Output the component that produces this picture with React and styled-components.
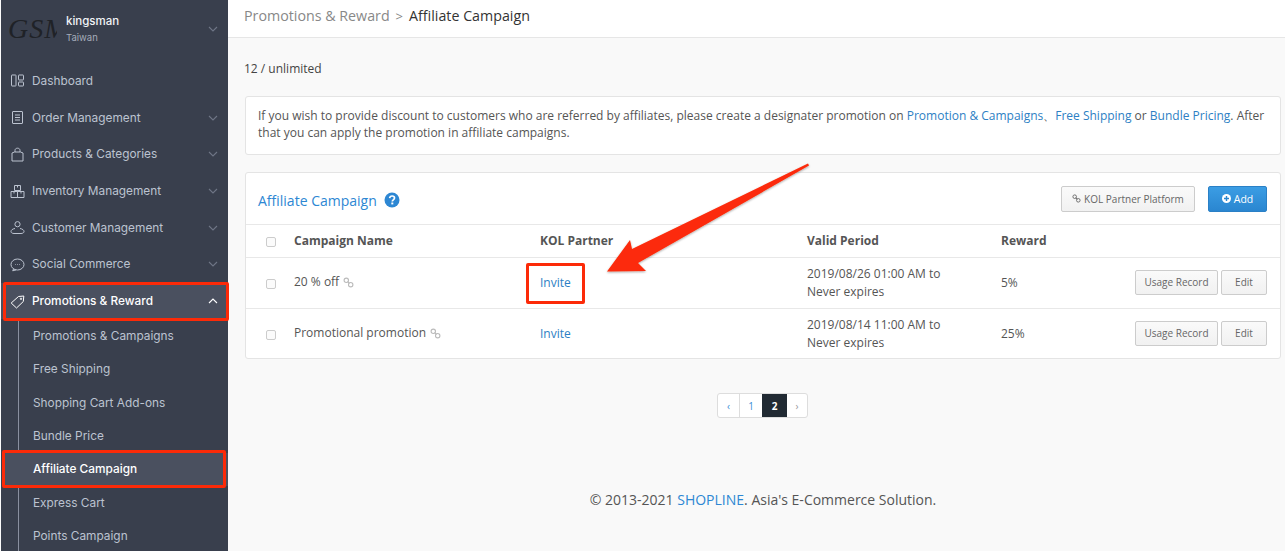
import React from 'react';
import styled, { createGlobalStyle } from 'styled-components';

const GlobalStyle = createGlobalStyle`
  html, body {
    margin: 0;
    padding: 0;
    height: 100%;
    overflow: hidden;
    background: #f9f9f9;
  }
  * { box-sizing: border-box; }
`;

const Page = styled.div`
  position: relative;
  display: flex;
  width: 1285px;
  height: 551px;
  overflow: hidden;
  font-family: 'Open Sans', sans-serif;
  color: #555;
`;

const Sidebar = styled.aside`
  width: 228px;
  flex: none;
  height: 551px;
  overflow: hidden;
  padding-left: 1px;
  background: #fbfbfb;
  font-family: Inter, sans-serif;
`;

const SidebarInner = styled.div`
  height: 100%;
  background: #393f4d;
`;

const Brand = styled.div`
  display: flex;
  align-items: center;
  height: 62.6px;
  padding: 0 10px 4px 7px;
`;

const Logo = styled.div`
  width: 49px;
  height: 32px;
  overflow: hidden;
  font: italic 28px/32px 'Liberation Serif', serif;
  color: #1f2227;
  letter-spacing: 1px;
  white-space: nowrap;
`;

const BrandText = styled.div`
  flex: 1;
  margin-left: 9px;
  margin-top: -1px;
`;

const BrandName = styled.div`
  font-size: 11.5px;
  font-weight: 500;
  line-height: 16px;
  color: #f2f4f7;
`;

const BrandRegion = styled.div`
  font-size: 9.5px;
  line-height: 14px;
  margin-top: 2px;
  color: #a5acba;
`;

const MenuItem = styled.div`
  display: flex;
  align-items: center;
  height: 36.7px;
  padding: 0 10px 0 9px;
  font-size: 11.85px;
  font-weight: ${p => (p.$active ? 500 : 400)};
  color: ${p => (p.$active ? '#fff' : '#bcc3d0')};
  background: ${p => (p.$active ? '#4a505f' : 'transparent')};
`;

const MenuIcon = styled.svg`
  width: 15px;
  height: 15px;
  flex: none;
  margin-right: 7px;
  fill: none;
  stroke: currentColor;
  stroke-width: 1;
`;

const MenuLabel = styled.span`
  flex: 1;
`;

const Chevron = styled.svg`
  width: 10px;
  height: 6px;
  flex: none;
  fill: none;
  stroke: ${p => (p.$active ? '#fff' : '#6f7686')};
  stroke-width: 1.1;
`;

const SubMenu = styled.div`
  margin-left: 17px;
  border-left: 1px solid #8a90a0;
`;

const SubItem = styled.div`
  display: flex;
  align-items: center;
  height: 33.3px;
  margin-left: ${p => (p.$active ? '-17px' : '0')};
  padding-left: ${p => (p.$active ? '31px' : '14px')};
  font-size: 11.85px;
  font-weight: ${p => (p.$active ? 500 : 400)};
  color: ${p => (p.$active ? '#fff' : '#bcc3d0')};
  background: ${p => (p.$active ? '#4a505f' : 'transparent')};
`;

const Main = styled.main`
  flex: 1;
  min-width: 0;
  display: flex;
  flex-direction: column;
`;

const TopBar = styled.header`
  display: flex;
  align-items: center;
  height: 38px;
  padding: 0 0 6px 16px;
  background: #fff;
  border-bottom: 1px solid #e6e6e6;
  font-size: 14.25px;
  color: #888;
`;

const Separator = styled.span`
  margin: 0 6px;
  font-size: 13px;
`;

const Crumb = styled.span`
  color: #333;
`;

const Content = styled.div`
  padding: 0 4px 0 17px;
  display: flex;
  flex-direction: column;
`;

const Quota = styled.div`
  height: 58px;
  margin-left: -1px;
  padding-top: 22px;
  font-size: 12px;
  line-height: 17px;
  color: #444;
`;

const Notice = styled.div`
  height: 59px;
  padding: 10px 12px;
  background: #fff;
  border: 1px solid #e4e4e4;
  border-radius: 3px;
  font-size: 12px;
  line-height: 17px;
  color: #555;
`;

const TextLink = styled.a`
  color: #2d7fc4;
`;

const Card = styled.section`
  margin-top: 17px;
  background: #fff;
  border: 1px solid #e4e4e4;
  border-radius: 3px;
  height: 187px;
`;

const CardHead = styled.div`
  display: flex;
  align-items: center;
  height: 52px;
  padding: 0 13px 0 12px;
  border-bottom: 1px solid #e8e8e8;
`;

const CardTitle = styled.h2`
  margin: 3px 0 0;
  font-size: 14px;
  font-weight: 400;
  color: #2d87d3;
`;

const HelpIcon = styled.svg`
  width: 16px;
  height: 16px;
  margin: 3px 0 0 7px;
`;

const CardActions = styled.div`
  margin-left: auto;
  display: flex;
  gap: 13px;
`;

const Button = styled.button`
  display: inline-flex;
  align-items: center;
  justify-content: center;
  gap: 3px;
  height: ${p => (p.$small ? '25px' : '26px')};
  padding: 0;
  width: ${p => p.$w}px;
  font-family: 'Open Sans', sans-serif;
  font-size: ${p => (p.$primary ? '10.5px' : '10px')};
  color: ${p => (p.$primary ? '#fff' : '#666')};
  background: ${p => (p.$primary ? 'linear-gradient(#3b9de4, #2a86d0)' : 'linear-gradient(#fafafa, #f1f1f1)')};
  border: 1px solid ${p => (p.$primary ? '#2a80c6' : '#ccc')};
  border-radius: 2px;
`;

const Row = styled.div`
  display: grid;
  grid-template-columns: 48px 246px 267px 194px 1fr;
  align-items: center;
  height: ${p => (p.$head ? '33px' : p.$last ? '50px' : '51px')};
  border-bottom: ${p => (p.$last ? 'none' : '1px solid #e8e8e8')};
  font-size: 12px;
  line-height: 18px;
  color: #555;
`;

const HeadCell = styled.div`
  font-weight: 700;
  color: #555;
  margin-top: -1px;
`;

const CheckCell = styled.div`
  display: flex;
  justify-content: center;
  padding-left: 1px;
  margin-top: 2px;
`;

const Check = styled.span`
  width: 10px;
  height: 10px;
  background: #fbfbfb;
  border: 1px solid #ccc;
  border-radius: 2px;
`;

const NameCell = styled.div`
  display: flex;
  align-items: center;
  gap: 4px;
  margin-top: -2px;
`;

const LinkIcon = styled.svg`
  width: ${p => p.$size || 11}px;
  height: ${p => p.$size || 11}px;
  fill: none;
  stroke: ${p => p.$color || '#bbb'};
  stroke-width: 1.2;
`;

const RewardWrap = styled.div`
  display: grid;
  grid-template-columns: 1fr auto;
  align-items: center;
`;

const RowActions = styled.div`
  display: flex;
  justify-content: flex-end;
  gap: 3px;
  padding-right: 13px;
  margin-top: -2px;
`;

const Pager = styled.nav`
  display: flex;
  align-self: center;
  margin: 34px 0 0 -1px;
  height: 25px;
  background: #fff;
  border: 1px solid #ddd;
  border-radius: 3px;
`;

const PageItem = styled.span`
  display: flex;
  align-items: center;
  justify-content: center;
  width: ${p => p.$w}px;
  font-size: 10px;
  font-weight: ${p => (p.$current ? 700 : 400)};
  color: ${p => (p.$current ? '#fff' : p.$muted ? '#999' : '#3a8fd6')};
  background: ${p => (p.$current ? '#212a33' : 'transparent')};
  border-left: ${p => (p.$divider ? '1px solid #ddd' : 'none')};
`;

const Footer = styled.footer`
  margin-top: 72px;
  text-align: center;
  font-size: 14px;
  line-height: 19px;
  color: #555;
`;

const FooterLink = styled.a`
  color: #2d87d3;
`;

const Mark = styled.div`
  position: absolute;
  left: ${p => p.$x}px;
  top: ${p => p.$y}px;
  width: ${p => p.$w}px;
  height: ${p => p.$h}px;
  border: 3px solid #fc2a08;
  border-radius: 2px;
  pointer-events: none;
`;

const ArrowLayer = styled.svg`
  position: absolute;
  left: 600px;
  top: 155px;
  width: 215px;
  height: 125px;
  overflow: visible;
  pointer-events: none;
`;

const icons = {
  dashboard: <><rect x="1.5" y="2" width="4.5" height="11" rx=".5" /><rect x="8.5" y="2" width="5" height="5" rx=".5" /><rect x="8.5" y="9" width="5" height="4" rx=".5" /></>,
  order: <><rect x="2.5" y="1.5" width="10" height="12" rx=".5" /><path d="M5 5h5M5 7.5h5M5 10h5" /></>,
  bag: <path d="M2 14V6l2.5-1h6L13 6v8zM5 5V3.5C5 2 6 1.2 7.5 1.2S10 2 10 3.5V5" />,
  inventory: <path d="M4.5 1.5h6v5h-6zM1 7.5h6.5v6H1zM7.5 7.5H14v6H7.5zM7.5 1.5v2M4 7.5v2M11 7.5v2" />,
  customer: <><circle cx="7.5" cy="4.2" r="2.6" /><path d="M5 8.5c-2.5.4-4 1.6-4 3 0 1.2 1.2 2 3 2h7c1.8 0 3-.8 3-2 0-1.4-1.5-2.6-4-3" /></>,
  social: <><ellipse cx="7.5" cy="7.5" rx="6.5" ry="5.5" /><path d="M3.5 12l-.8 1.8L6 12.9M5 7.5h.6M7.2 7.5h.6M9.4 7.5h.6" /></>,
  tag: <><path d="M1.2 9L8.5 2.5l5.3-.5-.5 5.5L6.5 14z" /><circle cx="11" cy="4.8" r=".7" /></>,
};

const menu = [
  { label: 'Dashboard', icon: 'dashboard', flat: true },
  { label: 'Order Management', icon: 'order' },
  { label: 'Products & Categories', icon: 'bag' },
  { label: 'Inventory Management', icon: 'inventory' },
  { label: 'Customer Management', icon: 'customer' },
  { label: 'Social Commerce', icon: 'social' },
];

const subMenu = ['Promotions & Campaigns', 'Free Shipping', 'Shopping Cart Add-ons', 'Bundle Price', 'Affiliate Campaign', 'Express Cart', 'Points Campaign'];

const campaigns = [
  { name: '20 % off', date: '2019/08/26 01:00 AM to', reward: '5%' },
  { name: 'Promotional promotion', date: '2019/08/14 11:00 AM to', reward: '25%', last: true },
];

const ChainGlyph = ({ size, color }) => (
  <LinkIcon viewBox="0 0 12 12" $size={size} $color={color}>
    <circle cx="3.6" cy="3.6" r="2.4" />
    <circle cx="8.4" cy="8.4" r="2.4" />
    <path d="M5 5l2 2" />
  </LinkIcon>
);

const ChevronIcon = ({ up, active }) => (
  <Chevron viewBox="0 0 10 6" $active={active}>
    <path d={up ? 'M1 5l4-4 4 4' : 'M1 1l4 4 4-4'} />
  </Chevron>
);

export default function App() {
  return (
    <Page>
      <GlobalStyle />
      <Sidebar>
        <SidebarInner>
          <Brand>
            <Logo>GSM</Logo>
            <BrandText>
              <BrandName>kingsman</BrandName>
              <BrandRegion>Taiwan</BrandRegion>
            </BrandText>
            <ChevronIcon />
          </Brand>
          {menu.map(item => (
            <MenuItem key={item.label}>
              <MenuIcon viewBox="0 0 15 15">{icons[item.icon]}</MenuIcon>
              <MenuLabel>{item.label}</MenuLabel>
              {!item.flat && <ChevronIcon />}
            </MenuItem>
          ))}
          <MenuItem $active>
            <MenuIcon viewBox="0 0 15 15">{icons.tag}</MenuIcon>
            <MenuLabel>Promotions &amp; Reward</MenuLabel>
            <ChevronIcon up active />
          </MenuItem>
          <SubMenu>
            {subMenu.map(label => (
              <SubItem key={label} $active={label === 'Affiliate Campaign'}>{label}</SubItem>
            ))}
          </SubMenu>
        </SidebarInner>
      </Sidebar>

      <Main>
        <TopBar>
          Promotions &amp; Reward
          <Separator>&gt;</Separator>
          <Crumb>Affiliate Campaign</Crumb>
        </TopBar>
        <Content>
          <Quota>12 / unlimited</Quota>
          <Notice>
            If you wish to provide discount to customers who are referred by affiliates, please create a designater promotion on{' '}
            <TextLink>Promotion &amp; Campaigns</TextLink>、<TextLink>Free Shipping</TextLink> or <TextLink>Bundle Pricing</TextLink>. After that you can apply the promotion in affiliate campaigns.
          </Notice>
          <Card>
            <CardHead>
              <CardTitle>Affiliate Campaign</CardTitle>
              <HelpIcon viewBox="0 0 16 16">
                <circle cx="8" cy="8" r="7.5" fill="#2d87d3" />
                <path d="M5.6 6.2C5.8 4.8 6.8 4 8.1 4c1.4 0 2.4.9 2.4 2 0 1.9-2.2 1.8-2.2 3.4" fill="none" stroke="#fff" strokeWidth="1.7" />
                <rect x="7.3" y="10.5" width="2" height="1.9" fill="#fff" />
              </HelpIcon>
              <CardActions>
                <Button $w={134}><ChainGlyph size={9} color="#666" /> KOL Partner Platform</Button>
                <Button $w={59} $primary>
                  <svg width="9" height="9" viewBox="0 0 9 9">
                    <circle cx="4.5" cy="4.5" r="4.5" fill="#fff" />
                    <path d="M4.5 2v5M2 4.5h5" stroke="#2a86d0" strokeWidth="1.4" />
                  </svg>
                  Add
                </Button>
              </CardActions>
            </CardHead>
            <Row $head>
              <CheckCell><Check /></CheckCell>
              <HeadCell>Campaign Name</HeadCell>
              <HeadCell>KOL Partner</HeadCell>
              <HeadCell>Valid Period</HeadCell>
              <HeadCell>Reward</HeadCell>
            </Row>
            {campaigns.map(c => (
              <Row key={c.name} $last={c.last}>
                <CheckCell><Check /></CheckCell>
                <NameCell>{c.name} <ChainGlyph /></NameCell>
                <div><TextLink>Invite</TextLink></div>
                <div>{c.date}<br />Never expires</div>
                <RewardWrap>
                  <span>{c.reward}</span>
                  <RowActions>
                    <Button $small $w={83}>Usage Record</Button>
                    <Button $small $w={46}>Edit</Button>
                  </RowActions>
                </RewardWrap>
              </Row>
            ))}
          </Card>
          <Pager>
            <PageItem $w={21}>‹</PageItem>
            <PageItem $w={23} $divider>1</PageItem>
            <PageItem $w={25} $current>2</PageItem>
            <PageItem $w={20} $muted>›</PageItem>
          </Pager>
          <Footer>© 2013-2021 <FooterLink>SHOPLINE</FooterLink>. Asia's E-Commerce Solution.</Footer>
        </Content>
      </Main>

      <Mark $x={3} $y={282} $w={226} $h={39} />
      <Mark $x={2} $y={450} $w={224} $h={38} />
      <Mark $x={526} $y={263} $w={59} $h={41} />
      <ArrowLayer viewBox="600 155 215 125">
        <defs>
          <filter id="arrowShadow" x="-10%" y="-10%" width="120%" height="130%">
            <feDropShadow dx="0" dy="1" stdDeviation="1" floodColor="#000" floodOpacity="0.35" />
          </filter>
        </defs>
        <path
          d="M808 163.5L809 165.5L638 263L646 271L607 271.5L630 240L632 249Z"
          fill="#fc2a08"
          filter="url(#arrowShadow)"
        />
      </ArrowLayer>
    </Page>
  );
}
